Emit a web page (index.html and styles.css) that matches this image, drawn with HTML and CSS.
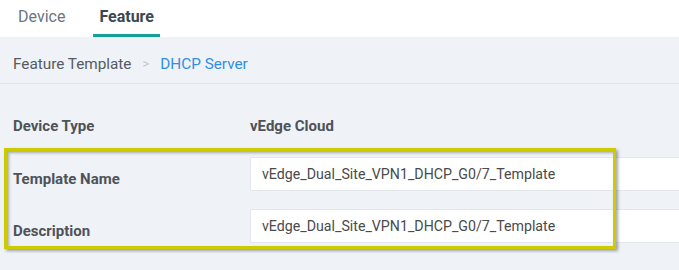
FILE: index.html
```html
<!DOCTYPE html>
<html lang="en">
<head>
  <meta charset="UTF-8" />
  <title>Feature Template - DHCP Server</title>
  <link rel="stylesheet" href="styles.css">
</head>
<body>
  <nav class="tabs">
    <div class="tab">Device</div>
    <div class="tab active">Feature</div>
  </nav>

  <div class="crumbs">
    <span class="crumb">Feature Template</span>
    <span class="sep">&gt;</span>
    <span class="crumb current">DHCP Server</span>
  </div>

  <div class="form">
    <div class="row">
      <div class="label">Device Type</div>
      <div class="value">vEdge Cloud</div>
    </div>
    <div class="row field">
      <div class="label">Template Name</div>
      <input class="input" type="text" value="vEdge_Dual_Site_VPN1_DHCP_G0/7_Template" />
    </div>
    <div class="row field">
      <div class="label">Description</div>
      <input class="input" type="text" value="vEdge_Dual_Site_VPN1_DHCP_G0/7_Template" />
    </div>

    <div class="highlight"></div>
  </div>
</body>
</html>
```

FILE: styles.css
```css
body { margin: 0; font-family: Roboto, "Liberation Sans", sans-serif; font-size: 14px; background-color: #eff2f7; color: #4a4a4a; }

.tabs { display: flex; gap: 22px; height: 37px; padding-left: 12px; background-color: #ffffff; }
.tab { padding: 0 6px; line-height: 34px; color: #6b7480; font-size: 16px; border-bottom: 3px solid transparent; }
.tab.active { font-weight: bold; color: #3d4752; border-bottom-color: #12a394; }

.crumbs { display: flex; align-items: center; gap: 11px; height: 47px; padding: 7px 0 0 13px; box-sizing: border-box; border-bottom: 1px solid #e1e4e9; }
.crumb { color: #555b61; font-size: 15.3px; }
.crumb.current { color: #2f8fe3; }
.sep { color: #c3c7cc; font-size: 13px; }

.form { position: relative; padding: 32px 0 30px; }
.row { display: flex; align-items: center; }
.row + .row { margin-top: 18px; }
.row:nth-child(2) { margin-top: 21px; }
.label { width: 237px; padding-left: 13px; font-weight: bold; font-size: 15px; color: #4f5257; line-height: 20px; }
.value { font-weight: bold; font-size: 15px; color: #4f5257; line-height: 20px; }
.field { align-items: flex-end; }
.field .label { padding-bottom: 2px; }
.input { flex: 1; height: 34px; box-sizing: border-box; margin: 0; padding: 0 10px 0 11px; border: 1px solid #e3e6ea; border-right: none; background-color: #ffffff; font-family: Roboto, "Liberation Sans", sans-serif; font-size: 14.2px; color: #4a4a4a; outline: none; }

.highlight { position: absolute; left: 4px; top: 64px; width: 612px; height: 101px; box-sizing: border-box; border: 3px solid #cbcb00; box-shadow: 2px 2px 3px rgba(0, 0, 0, 0.35), inset 2px 2px 3px rgba(0, 0, 0, 0.3); pointer-events: none; }
```
